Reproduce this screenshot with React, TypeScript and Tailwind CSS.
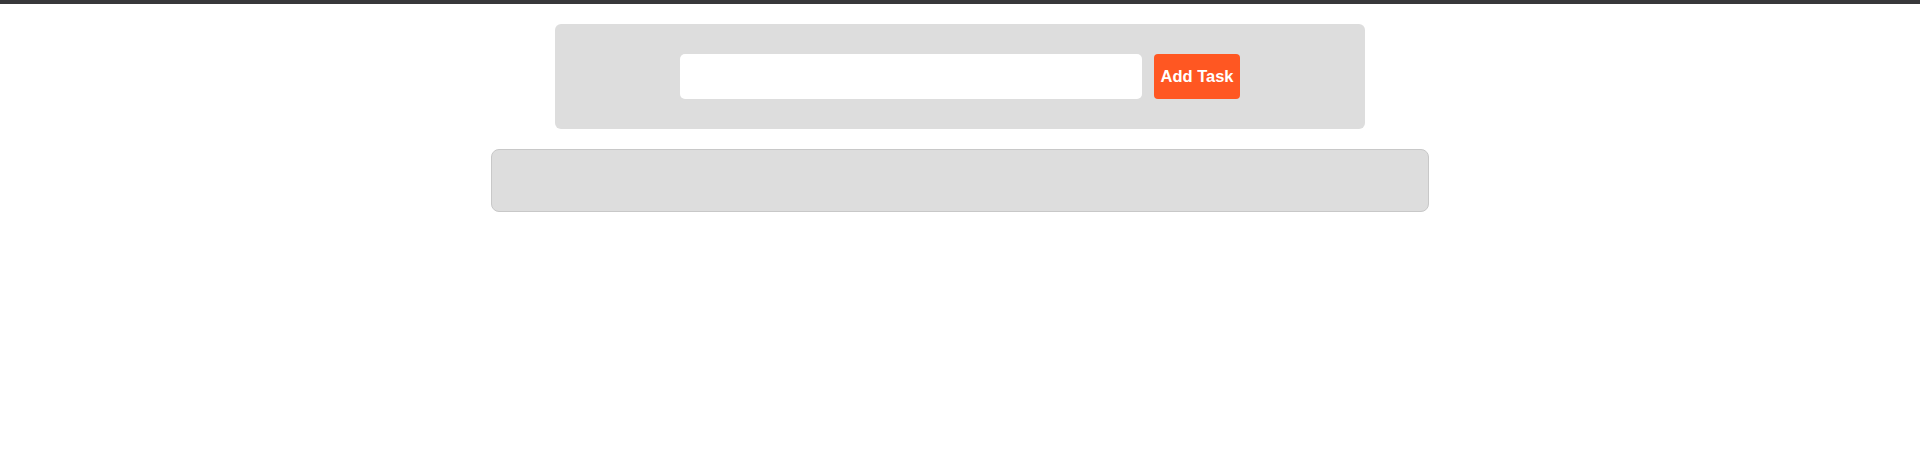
import React from "react";

export default function App() {
  return (
    <div className="min-h-[459px] w-full bg-white" style={{ fontFamily: '"Liberation Sans", Arial, sans-serif' }}>
      <div className="h-[4px] w-full bg-[#38383a]" />
      <div className="flex flex-col items-center pt-[20px]">
        <div className="flex h-[105px] w-[810px] items-center justify-center gap-[12px] rounded-[6px] bg-[#dddddd]">
          <input
            type="text"
            className="h-[45px] w-[462px] rounded-[5px] border-0 bg-white px-[10px] text-[16px] outline-none"
          />
          <button className="flex h-[45px] w-[86px] items-center justify-center rounded-[4px] border-0 bg-[#ff5722] text-[16.5px] font-bold text-white">
            Add Task
          </button>
        </div>
        <div className="mt-[20px] h-[63px] w-[938px] rounded-[8px] border border-[#c8c8c8] bg-[#dddddd]" />
      </div>
    </div>
  );
}
